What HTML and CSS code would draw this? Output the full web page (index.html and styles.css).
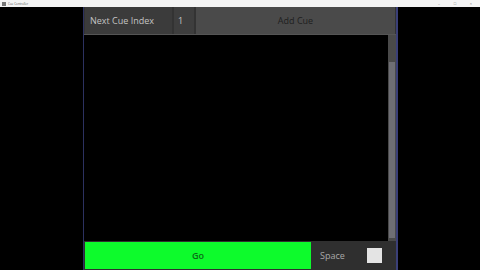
FILE: index.html
```html
<!DOCTYPE html>
<html>
<head>
<meta charset="utf-8">
<link rel="stylesheet" href="styles.css">
</head>
<body>
<div class="titlebar">
  <span class="appicon"></span>
  <span class="apptitle">Cue Controller</span>
  <span class="spacer"></span>
  <span class="ctl">&#8211;</span>
  <span class="ctl">&#9633;</span>
  <span class="ctl">&#215;</span>
</div>
<div class="desk">
  <div class="window">
    <div class="toprow">
      <div class="label">Next Cue Index</div>
      <div class="index">1</div>
      <div class="addbtn">Add Cue</div>
    </div>
    <div class="middle">
      <div class="list"></div>
      <div class="scroll"><div class="thumb"></div></div>
    </div>
    <div class="bottom">
      <div class="go">Go</div>
      <div class="space">Space</div>
      <div class="check"></div>
    </div>
  </div>
</div>
</body>
</html>
```
FILE: styles.css
```css
html, body {
  margin: 0;
  padding: 0;
  background: #000;
  width: 480px;
  height: 270px;
  overflow: hidden;
  font-family: "Open Sans", "Liberation Sans", sans-serif;
}
.titlebar {
  height: 7px;
  background: #f4f4f4;
  display: flex;
  align-items: center;
  padding: 0 2px;
  gap: 2px;
}
.appicon {
  width: 4px;
  height: 4px;
  background: #777;
}
.apptitle {
  font-size: 3px;
  color: #555;
}
.spacer { flex: 1; }
.ctl {
  font-size: 4px;
  color: #777;
  width: 14px;
  text-align: center;
}
.desk {
  height: 263px;
  display: flex;
  padding-left: 83px;
}
.window {
  width: 312px;
  border-left: 1px solid #2c3160;
  border-right: 2px solid #3a3f78;
  background: #2f2f2f;
  display: flex;
  flex-direction: column;
}
.toprow {
  height: 27px;
  display: flex;
  background: #333;
  border-bottom: 1px solid #555;
  gap: 2px;
  padding-left: 1px;
}
.label {
  width: 87px;
  background: #3b3b3b;
  color: #c4c4c4;
  font-size: 9px;
  display: flex;
  align-items: center;
  padding-left: 5px;
  box-sizing: border-box;
}
.index {
  width: 20px;
  background: #3e3e3e;
  color: #c4c4c4;
  font-size: 9px;
  display: flex;
  align-items: center;
  padding-left: 4px;
  box-sizing: border-box;
}
.addbtn {
  flex: 1;
  background: #4a4a4a;
  color: #1e1e1e;
  font-size: 9px;
  display: flex;
  align-items: center;
  justify-content: center;
  margin-right: 1px;
}
.middle {
  flex: 1;
  display: flex;
}
.list {
  flex: 1;
  background: #000;
}
.scroll {
  width: 8px;
  background: #4a4a4a;
  display: flex;
  flex-direction: column;
  padding: 0 1px;
  box-sizing: border-box;
}
.thumb {
  margin-top: 27px;
  flex: 1;
  background: #6e6e74;
  margin-bottom: 3px;
}
.bottom {
  height: 29px;
  display: flex;
  align-items: center;
  background: #2f2f2f;
  padding-left: 1px;
}
.go {
  width: 226px;
  height: 27px;
  background: #0dfb2c;
  color: #0b6a16;
  font-size: 9px;
  font-weight: 600;
  display: flex;
  align-items: center;
  justify-content: center;
}
.space {
  color: #a8a8a8;
  font-size: 9px;
  margin-left: 9px;
}
.check {
  width: 15px;
  height: 15px;
  background: #e4e4e4;
  margin-left: 22px;
}
```
